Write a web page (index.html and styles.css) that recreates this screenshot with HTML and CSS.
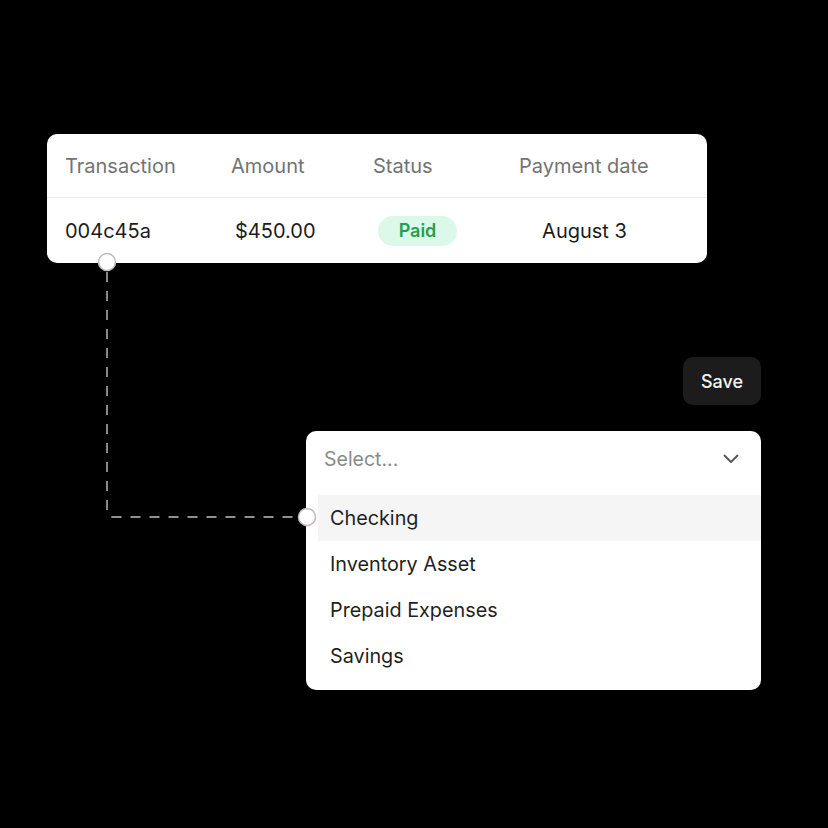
FILE: index.html
```html
<!DOCTYPE html>
<html>
<head>
<meta charset="utf-8">
<link rel="stylesheet" href="styles.css">
</head>
<body>
<div class="stage">
  <div class="table-card">
    <div class="row head">
      <div class="cell c1">Transaction</div>
      <div class="cell c2">Amount</div>
      <div class="cell c3">Status</div>
      <div class="cell c4">Payment date</div>
    </div>
    <div class="row body">
      <div class="cell c1">004c45a</div>
      <div class="cell c2 amt">$450.00</div>
      <div class="cell c3"><span class="badge">Paid</span></div>
      <div class="cell c4 date">August 3</div>
    </div>
  </div>

  <div class="save-row">
    <button class="save">Save</button>
  </div>

  <div class="dropdown">
    <div class="dd-head">
      <span class="placeholder">Select...</span>
      <svg class="chev" width="16" height="10" viewBox="0 0 16 10"><path d="M1.5 1.5 L8 8 L14.5 1.5" fill="none" stroke="#555" stroke-width="1.8" stroke-linecap="round" stroke-linejoin="round"/></svg>
    </div>
    <ul class="options">
      <li class="opt active">Checking</li>
      <li class="opt">Inventory Asset</li>
      <li class="opt">Prepaid Expenses</li>
      <li class="opt">Savings</li>
    </ul>
  </div>

  <svg class="connector" width="828" height="828" viewBox="0 0 828 828">
    <path d="M107 272 L107 511 Q107 517 113 517 L298 517" fill="none" stroke="#c4c0c0" stroke-width="1.4" stroke-dasharray="10 9"/>
    <circle cx="107" cy="262" r="8.5" fill="#fff" stroke="#c2b8ba" stroke-width="1.5"/>
    <circle cx="307" cy="517" r="8.5" fill="#fff" stroke="#c2b8ba" stroke-width="1.5"/>
  </svg>
</div>
</body>
</html>
```

FILE: styles.css
```css
* { box-sizing: border-box; }
html, body { margin: 0; padding: 0; background: #000; }
body { font-family: Inter, "Noto Sans", "Liberation Sans", sans-serif; }

.stage {
  position: relative;
  width: 828px;
  height: 828px;
  padding-top: 134px;
  background: #000;
  overflow: hidden;
}

.table-card {
  margin-left: 47px;
  width: 660px;
  height: 129px;
  background: #fff;
  border-radius: 10px;
  overflow: hidden;
}
.row {
  display: grid;
  grid-template-columns: 166px 142px 146px 1fr;
  align-items: center;
  padding-left: 18px;
}
.row.head {
  height: 64px;
  border-bottom: 1.5px solid #e9e9e9;
  color: #737373;
  font-size: 20px;
  padding-top: 1px;
}
.row.body {
  height: 65px;
  color: #1c1c1c;
  font-size: 20px;
}
.cell.amt { padding-left: 4px; }
.cell.c4 { width: 131px; white-space: nowrap; }
.cell.date { text-align: center; }
.badge {
  display: inline-block;
  margin-left: 5px;
  width: 79px;
  height: 30px;
  line-height: 30px;
  text-align: center;
  border-radius: 15px;
  background: #dbf8e8;
  color: #22a04f;
  font-weight: 600;
  font-size: 18px;
}

.save-row {
  display: flex;
  justify-content: flex-end;
  width: 761px;
  margin-top: 94px;
}
.save {
  width: 78px;
  height: 48px;
  border: 0;
  border-radius: 10px;
  background: #1c1c1c;
  color: #f4f4f4;
  font-family: inherit;
  font-size: 18px;
  font-weight: 500;
}

.dropdown {
  margin-top: 26px;
  margin-left: 306px;
  width: 455px;
  height: 259px;
  background: #fff;
  border-radius: 10px;
  overflow: hidden;
}
.dd-head {
  height: 64px;
  display: flex;
  align-items: center;
  justify-content: space-between;
  padding: 0 22px 0 18px;
  padding-bottom: 8px;
}
.placeholder {
  color: #8a8a8a;
  font-size: 19.5px;
}
.chev { display: block; }
.options {
  list-style: none;
  margin: 0;
  padding: 0 0 11px 12px;
}
.opt {
  height: 46px;
  line-height: 46px;
  padding-left: 12px;
  font-size: 19.8px;
  color: #1f1f1f;
}
.opt.active { background: #f5f5f5; }

.connector {
  position: absolute;
  left: 0;
  top: 0;
  pointer-events: none;
}
```
